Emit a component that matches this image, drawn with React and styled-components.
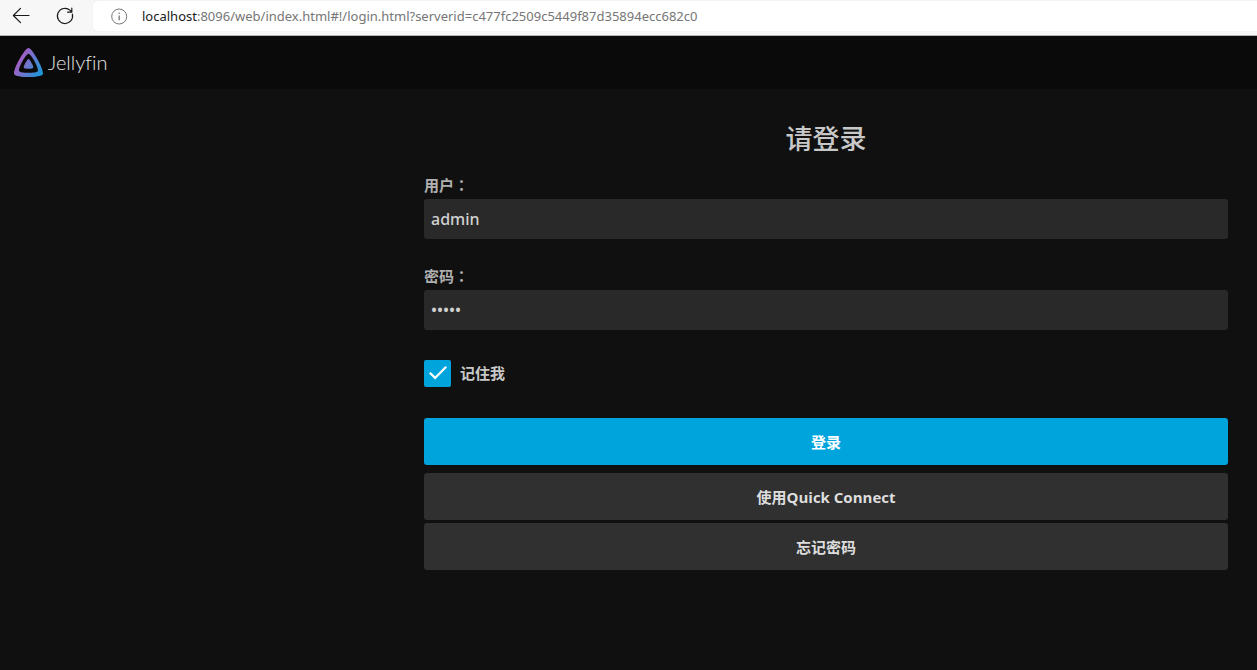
import React, { useState } from "react";
import styled, { createGlobalStyle } from "styled-components";

const GlobalStyle = createGlobalStyle`
  *, *::before, *::after { box-sizing: border-box; }
  html { background: #101010; }
  body {
    margin: 0;
    background: #101010;
    color: #d1d1d1;
    font-family: "Noto Sans", "Noto Sans CJK SC", sans-serif;
    font-size: 15px;
  }
  button, input { font: inherit; color: inherit; }
`;

const BrowserBar = styled.div`
  display: flex;
  align-items: flex-start;
  height: 36px;
  padding-top: 1px;
  background: #f7f7f7;
  border-bottom: 1px solid #b4b4b4;
`;

const NavButtons = styled.div`
  display: flex;
  gap: 24px;
  padding: 5px 18px 0 11px;
`;

const NavButton = styled.button`
  display: block;
  width: 20px;
  height: 20px;
  padding: 0;
  border: 0;
  background: none;
  color: #1b1b1b;

  svg { display: block; }
`;

const AddressBox = styled.div`
  display: flex;
  flex: 1;
  align-items: center;
  gap: 14px;
  height: 30px;
  padding-left: 18px;
  background: #fff;
  border-radius: 4px 0 0 4px;
  box-shadow: 0 0 1px #d0d0d0;
  color: #767676;
  font-family: "Noto Sans", sans-serif;
  font-size: 13px;
  line-height: 18px;
  white-space: nowrap;

  svg { flex: none; }
`;

const Host = styled.span`
  color: #1b1b1b;
`;

const Header = styled.header`
  display: flex;
  align-items: center;
  height: 53px;
  padding: 0 14px;
  background: #0a0a0a;
`;

const Brand = styled.a`
  display: flex;
  align-items: flex-start;
  gap: 5px;
  color: #e4e4e4;
  font-family: Lato, sans-serif;
  font-size: 20px;
  font-variant-ligatures: none;
  font-weight: 300;
  line-height: 28px;
  text-decoration: none;
`;

const LoginPage = styled.main`
  padding: 29px 29px 40px 424px;
`;

const Title = styled.h1`
  margin: 0;
  font-size: 27px;
  font-weight: 500;
  line-height: 42px;
  text-align: center;
  color: #c8c8c8;
`;

const Field = styled.div`
  margin-top: 26px;

  &:first-of-type { margin-top: 14px; }
`;

const FieldLabel = styled.label`
  display: block;
  padding-bottom: 3px;
  color: #b0b0b0;
  font-size: 15px;
  font-weight: 600;
  line-height: 22px;
`;

const CentredColon = styled.span`
  font-family: "Noto Sans CJK TC", sans-serif;
  line-height: 1;
`;

const TextInput = styled.input`
  display: block;
  width: 100%;
  height: 40px;
  padding: 0 7px;
  border: 0;
  border-radius: 3px;
  outline: 0;
  background: #292929;
  color: #d1d1d1;
  font-size: 16px;
  font-weight: 500;
`;

const RememberRow = styled.label`
  display: flex;
  align-items: center;
  gap: 9px;
  margin-top: 30px;
  color: #c8c8c8;
  font-weight: 600;
  line-height: 27px;
`;

const TickWrap = styled.span`
  display: grid;
  width: 27px;
  height: 27px;

  > * { grid-area: 1 / 1; }
  svg { place-self: center; pointer-events: none; }
`;

const TickBox = styled.input`
  appearance: none;
  width: 27px;
  height: 27px;
  margin: 0;
  border: 2px solid #00a4dc;
  border-radius: 2px;

  &:checked { background: #00a4dc; }
  &:not(:checked) + svg { visibility: hidden; }
`;

const Actions = styled.div`
  display: flex;
  flex-direction: column;
  gap: 3px;
  margin-top: 31px;
`;

const ActionButton = styled.button`
  width: 100%;
  height: 47px;
  margin: 0 0 ${(p) => (p.$primary ? 5 : 0)}px;
  padding: 0;
  border: 0;
  border-radius: 3px;
  background: ${(p) => (p.$primary ? "#00a4dc" : "#303030")};
  color: ${(p) => (p.$primary ? "#fff" : "#dedede")};
  font-family: "Open Sans", "Noto Sans CJK SC", sans-serif;
  font-weight: 700;
  line-height: 20px;
`;

function BackIcon() {
  return (
    <svg width="20" height="20" viewBox="0 0 20 20" fill="none" stroke="currentColor" strokeWidth="1.2" strokeLinecap="round" strokeLinejoin="round">
      <path d="M18 9.5H2.4M9.5 2.4L2.4 9.5l7.1 7.1" />
    </svg>
  );
}

function ReloadIcon() {
  return (
    <svg width="20" height="20" viewBox="0 0 20 20" fill="none" stroke="currentColor" strokeWidth="1.2" strokeLinecap="round" strokeLinejoin="round">
      <path d="M17.4 8.2A7.6 7.6 0 1 1 15.2 4.4L16.8 6M16.8 2.2V6.2H12.6" />
    </svg>
  );
}

function InfoIcon() {
  return (
    <svg width="17" height="17" viewBox="0 0 17 17" fill="none" stroke="#767676">
      <circle cx="8.2" cy="8.5" r="7.5" />
      <path d="M8.2 7.4v4.8" strokeWidth="1.3" />
      <circle cx="8.2" cy="5.2" r="0.8" fill="#767676" stroke="none" />
    </svg>
  );
}

function JellyfinIcon() {
  return (
    <svg width="29" height="29" viewBox="56 56 400 400" aria-hidden="true">
      <defs>
        <linearGradient id="brand" gradientUnits="userSpaceOnUse" x1="110.25" y1="213.3" x2="496.14" y2="436.09">
          <stop offset="0" stopColor="#aa5cc3" />
          <stop offset="1" stopColor="#00a4dc" />
        </linearGradient>
      </defs>
      <g fill="url(#brand)">
        <path d="M190.56 329.07c8.63 17.3 122.4 17.12 130.93 0 8.52-17.1-47.9-119.78-65.46-119.8-17.57 0-74.1 102.5-65.47 119.8z" />
        <path d="M58.75 417.03c25.97 52.15 368.86 51.55 394.55 0S308.93 56.08 256.03 56.08c-52.92 0-223.25 308.8-197.28 360.95zm68.04-45.25c-17.02-34.17 94.6-236.5 129.26-236.5 34.67 0 146.1 202.7 129.26 236.5-16.83 33.8-241.5 34.17-258.52 0z" />
      </g>
    </svg>
  );
}

function TickIcon() {
  return (
    <svg width="21" height="21" viewBox="0 0 21 21" fill="none" stroke="#fff" strokeWidth="2.2">
      <path d="M2.8 9.7L8.1 14.9L19.2 3.7" />
    </svg>
  );
}

export default function App() {
  const [user, setUser] = useState("admin");
  const [password, setPassword] = useState("admin");
  const [remember, setRemember] = useState(true);

  return (
    <>
      <GlobalStyle />
      <BrowserBar>
        <NavButtons>
          <NavButton type="button" aria-label="Back"><BackIcon /></NavButton>
          <NavButton type="button" aria-label="Reload"><ReloadIcon /></NavButton>
        </NavButtons>
        <AddressBox>
          <InfoIcon />
          <span>
            <Host>localhost</Host>:8096/web/index.html#!/login.html?serverid=c477fc2509c5449f87d35894ecc682c0
          </span>
        </AddressBox>
      </BrowserBar>
      <Header>
        <Brand href="#"><JellyfinIcon />Jellyfin</Brand>
      </Header>
      <LoginPage>
        <form onSubmit={(e) => e.preventDefault()}>
          <Title>请登录</Title>
          <Field>
            <FieldLabel htmlFor="user">用户<CentredColon>：</CentredColon></FieldLabel>
            <TextInput id="user" value={user} onChange={(e) => setUser(e.target.value)} />
          </Field>
          <Field>
            <FieldLabel htmlFor="password">密码<CentredColon>：</CentredColon></FieldLabel>
            <TextInput id="password" type="password" value={password} onChange={(e) => setPassword(e.target.value)} />
          </Field>
          <RememberRow>
            <TickWrap>
              <TickBox type="checkbox" checked={remember} onChange={(e) => setRemember(e.target.checked)} />
              <TickIcon />
            </TickWrap>
            记住我
          </RememberRow>
          <Actions>
            <ActionButton type="submit" $primary>登录</ActionButton>
            <ActionButton type="button">使用Quick Connect</ActionButton>
            <ActionButton type="button">忘记密码</ActionButton>
          </Actions>
        </form>
      </LoginPage>
    </>
  );
}
